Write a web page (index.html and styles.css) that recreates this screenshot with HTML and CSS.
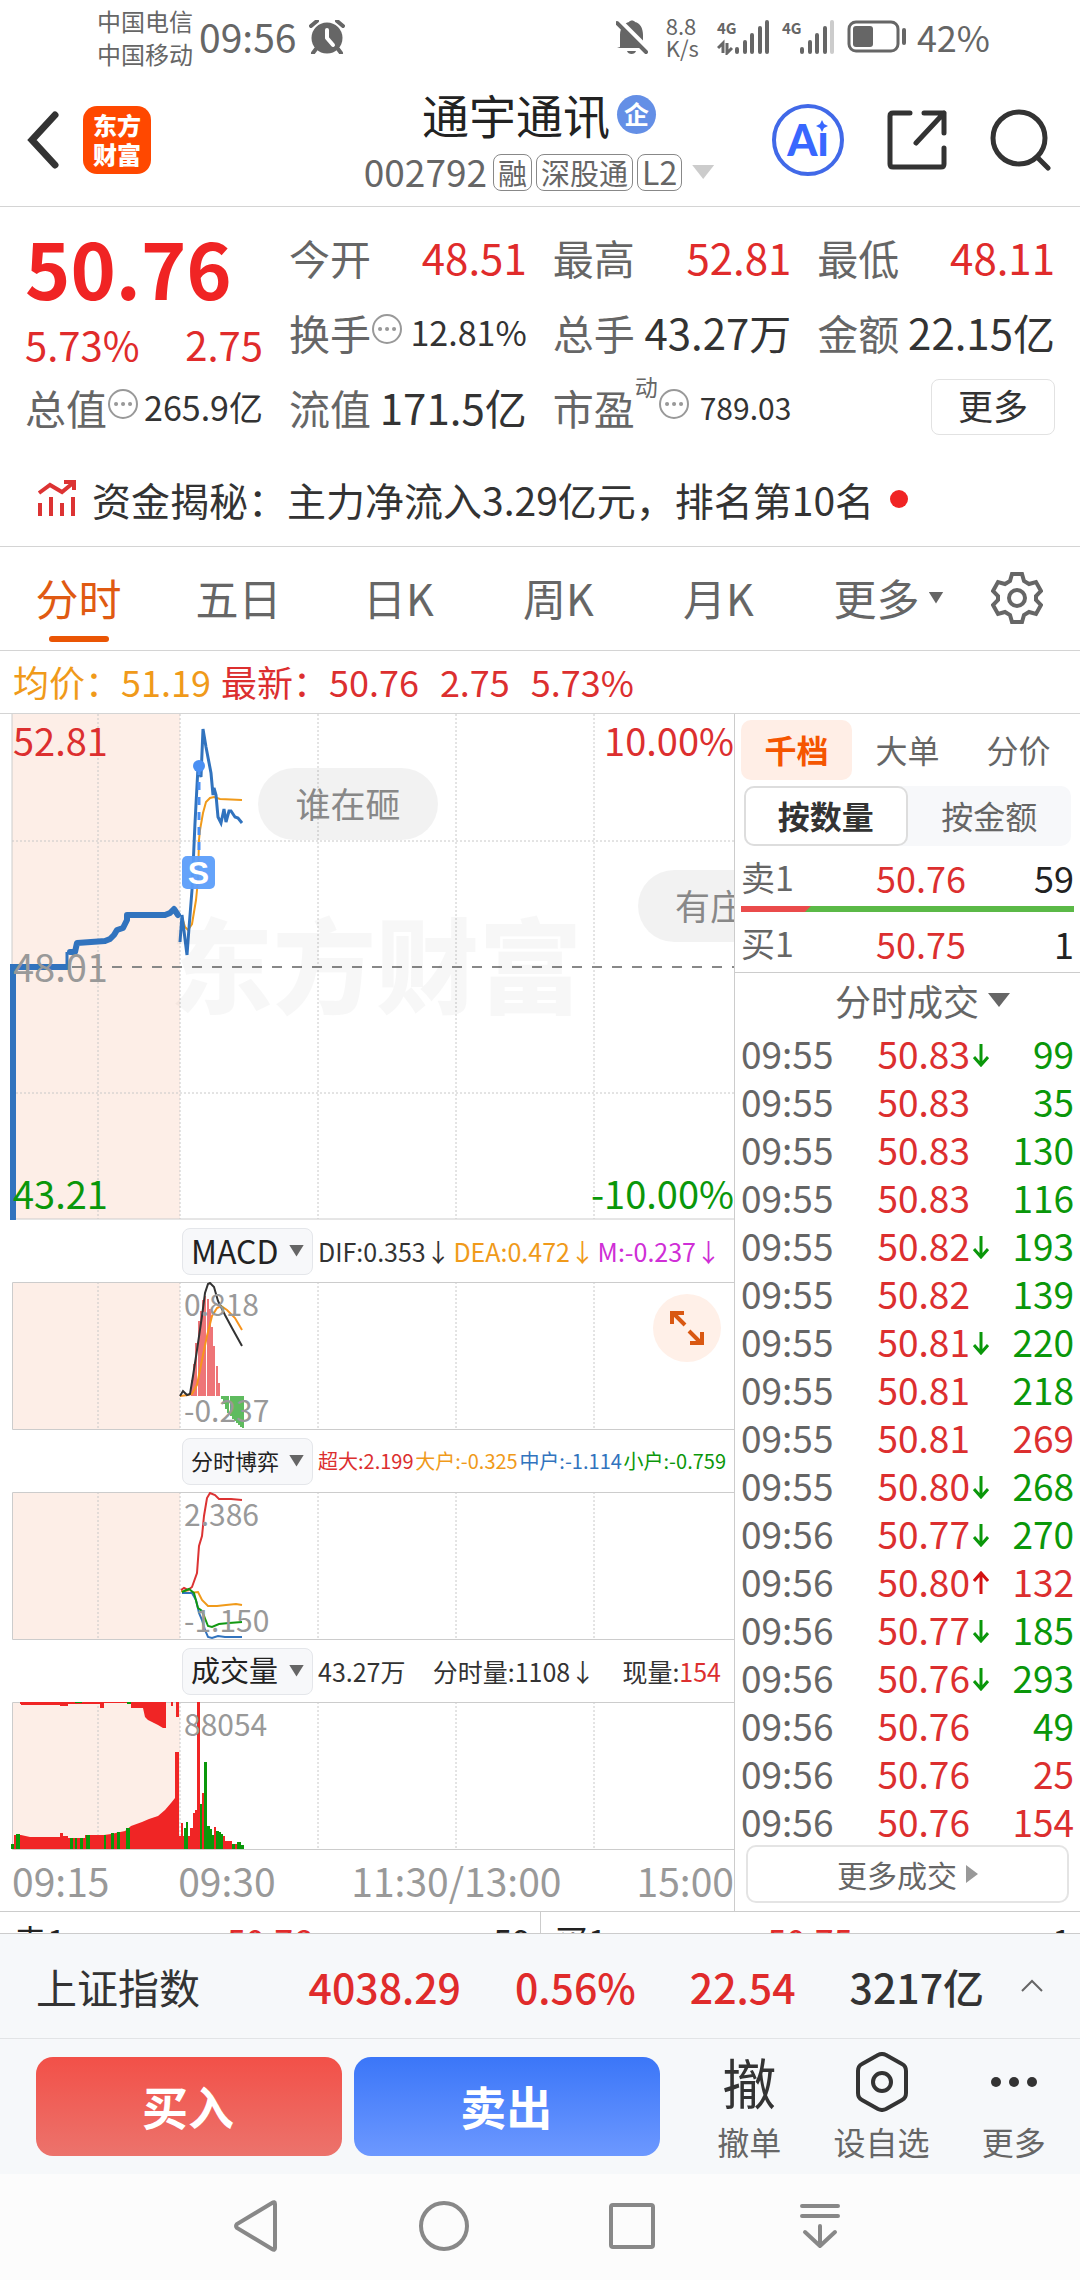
FILE: index.html
```html
<!DOCTYPE html>
<html lang="zh-CN">
<head>
<meta charset="utf-8">
<meta name="viewport" content="width=device-width, initial-scale=1">
<title>通宇通讯 002792</title>
<link rel="stylesheet" href="styles.css">
</head>
<body>
<div class="status-bar">
  <div class="carriers"><span>中国电信</span><span>中国移动</span></div>
  <span class="clock">09:56</span>
  <svg class="alarm" width="36" height="34" viewBox="0 0 36 34"><circle cx="18" cy="18" r="15.5" fill="#666"/><path d="M2 6L8 1M34 6L28 1M7 29L4 33M29 29L32 33" stroke="#666" stroke-width="4" stroke-linecap="round"/><path d="M18 10V18L24 25" stroke="#fff" stroke-width="4" fill="none" stroke-linecap="round" stroke-linejoin="round"/></svg>
  <div class="status-right">
    <svg width="32" height="36" viewBox="0 0 32 36"><path d="M4 28V16C4 8 9 4 13 3C14 1 18 1 19 3C24 4 27 9 27 16V24L29 28L30 29H1Z" fill="#666"/><path d="M11 32H20C19 36 12 36 11 32Z" fill="#666"/><path d="M3 1L32 30" stroke="#fff" stroke-width="5"/><path d="M1 4L30 33" stroke="#666" stroke-width="4" stroke-linecap="round"/></svg>
    <div class="speed"><span>8.8</span><span>K/s</span></div>
    <div class="signal"><span>4G</span><svg width="53" height="35" viewBox="0 0 53 35"><path d="M20 29V32M28 22V32M35 15V32M43 8V32M50 2V32" stroke="#666" stroke-width="4" stroke-linecap="round"/><path d="M6 33V23L1 28M10 23V33L15 28" stroke="#666" stroke-width="3" fill="none"/></svg></div>
    <div class="signal"><span>4G</span><svg width="53" height="35" viewBox="0 0 53 35"><path d="M20 29V32M28 22V32M35 15V32M43 8V32" stroke="#666" stroke-width="4" stroke-linecap="round"/><path d="M50 2V32" stroke="#ccc" stroke-width="4" stroke-linecap="round"/></svg></div>
    <svg width="60" height="34" viewBox="0 0 60 34"><rect x="2" y="2" width="49" height="29" rx="7" fill="none" stroke="#666" stroke-width="3"/><rect x="6" y="6" width="20" height="21" rx="3" fill="#666"/><path d="M57 10V23" stroke="#666" stroke-width="4" stroke-linecap="round"/></svg>
    <span class="battery">42%</span>
  </div>
</div>

<header class="title-bar">
  <div class="title-left">
    <button class="icon-button" aria-label="返回"><svg width="34" height="58" viewBox="0 0 34 58"><path d="M29 4L6 29L29 54" fill="none" stroke="#333" stroke-width="7" stroke-linecap="round" stroke-linejoin="miter"/></svg></button>
    <div class="logo"><span>东方</span><span>财富</span></div>
  </div>
  <div class="title-block">
    <h1>通宇通讯<span class="badge">企</span></h1>
    <div class="code-line"><span class="code">002792</span><span class="tag">融</span><span class="tag">深股通</span><span class="tag tag-wide">L2</span><i class="tri tri-light"></i></div>
  </div>
  <div class="title-right">
    <button class="icon-button ai" aria-label="智能助手"><span>Ai</span><svg class="spark" width="12" height="12" viewBox="0 0 12 12"><path d="M6 0L8 4L12 6L8 8L6 12L4 8L0 6L4 4Z" fill="#3867ff"/></svg></button>
    <button class="icon-button" aria-label="分享"><svg width="60" height="60" viewBox="0 0 60 60"><path d="M23 3H6Q3 3 3 6V54Q3 57 6 57H54Q57 57 57 54V38M37 3H57V23M57 3L29 33" fill="none" stroke="#333" stroke-width="5" stroke-linecap="round" stroke-linejoin="round"/></svg></button>
    <button class="icon-button" aria-label="搜索"><svg width="62" height="62" viewBox="0 0 62 62"><ellipse cx="29" cy="29" rx="26" ry="26" fill="none" stroke="#333" stroke-width="5"/><path d="M47 48L58 59" stroke="#333" stroke-width="5" stroke-linecap="round"/></svg></button>
  </div>
</header>

<section class="quote">
  <div class="price-col">
    <strong class="price">50.76</strong>
    <div class="change"><span>5.73%</span><span>2.75</span></div>
    <div class="stat"><span class="label">总值</span><svg class="info" viewBox="0 0 30 30"><circle cx="15" cy="15" r="14" fill="none" stroke="#999" stroke-width="2"/><path d="M8 15h.1M15 15h.1M22 15h.1" stroke="#999" stroke-width="4" stroke-linecap="round"/></svg><span class="value small">265.9亿</span></div>
  </div>
  <div class="stats">
    <div class="stat"><span class="label">今开</span><span class="value up">48.51</span></div>
    <div class="stat"><span class="label">最高</span><span class="value up">52.81</span></div>
    <div class="stat"><span class="label">最低</span><span class="value up">48.11</span></div>
    <div class="stat"><span class="label">换手</span><svg class="info" viewBox="0 0 30 30"><circle cx="15" cy="15" r="14" fill="none" stroke="#999" stroke-width="2"/><path d="M8 15h.1M15 15h.1M22 15h.1" stroke="#999" stroke-width="4" stroke-linecap="round"/></svg><span class="value small">12.81%</span></div>
    <div class="stat"><span class="label">总手</span><span class="value">43.27万</span></div>
    <div class="stat"><span class="label">金额</span><span class="value">22.15亿</span></div>
    <div class="stat"><span class="label">流值</span><span class="value">171.5亿</span></div>
    <div class="stat"><span class="label">市盈<sup>动</sup></span><svg class="info" viewBox="0 0 30 30"><circle cx="15" cy="15" r="14" fill="none" stroke="#999" stroke-width="2"/><path d="M8 15h.1M15 15h.1M22 15h.1" stroke="#999" stroke-width="4" stroke-linecap="round"/></svg><span class="value tiny">789.03</span></div>
    <div class="stat"><button class="more-stats">更多</button></div>
  </div>
</section>

<a class="news" href="#funds">
  <svg width="40" height="38" viewBox="0 0 40 38"><path d="M3 13L14 5L26 12L37 3M28 2H38V10M4 23V36M15 17V36M26 23V36M37 17V36" fill="none" stroke="#dc3333" stroke-width="4"/></svg>
  <span>资金揭秘：主力净流入3.29亿元，排名第10名</span><i class="dot"></i>
</a>

<nav class="periods">
  <button class="active">分时</button><button>五日</button><button>日K</button><button>周K</button><button>月K</button>
  <button>更多<i class="tri tri-mini"></i></button>
  <button aria-label="设置"><svg width="52" height="54" viewBox="0 0 52 54"><path d="M21 3H31L33 10L38 13L45 11L50 20L45 25V29L50 34L45 43L38 41L33 44L31 51H21L19 44L14 41L7 43L2 34L7 29V25L2 20L7 11L14 13L19 10Z" fill="none" stroke="#666" stroke-width="4"/><circle cx="26" cy="27" r="8" fill="none" stroke="#666" stroke-width="4"/></svg></button>
</nav>

<div class="averages"><span class="avg">均价：51.19</span><span>最新：50.76</span><span class="wide">2.75</span><span class="wide">5.73%</span></div>

<main class="market">
  <section class="charts">
    <div class="plot plot-price">
      <span class="watermark">东方财富</span>
      <svg viewBox="0 0 734 506" preserveAspectRatio="none">
        <rect x="12" y="0" width="168" height="505" fill="#fdeee7"/>
        <path class="grid" d="M98 0V505M180 0V505M318 0V505M456 0V505M594 0V505M12 127H734M12 379H734"/>
        <path d="M12 0V505H734" fill="none" stroke="#ccc"/>
        <path d="M12 253H734" stroke="#888" stroke-width="2" stroke-dasharray="10 10"/>
        <path d="M182 203L185 213L188 216L192 210L196 186L198 166L199 126L200 116L203 99L206 88L210 84L214 83L220 85L242 86" fill="none" stroke="#f09a1a" stroke-width="2"/>
        <path d="M13 505V253H67" fill="none" stroke="#3173be" stroke-width="6" stroke-linecap="round"/>
        <path d="M67 253V238" stroke="#3173be" stroke-width="3"/>
        <path d="M70 238H75L77 229L105 227L110 225L114 221L117 216L123 214L127 206V201H165L170 199L174 195L178 201" fill="none" stroke="#3173be" stroke-width="6" stroke-linecap="round" stroke-linejoin="round"/>
        <path d="M180 228L182 201L187 241L189 214L192 176L195 109L198 53L201 63L203 15L206 33L211 59L213 81L214 74L216 81L218 103L221 109L224 95L226 108L229 97H231L235 103L238 104L242 109" fill="none" stroke="#3173be" stroke-width="3"/>
        <path d="M199 53V142" stroke="#4a90f5" stroke-width="3" stroke-dasharray="8 7"/>
        <circle cx="199" cy="52" r="6" fill="#4a8ff3"/>
        <rect x="182" y="142" width="33" height="33" rx="5" fill="#5c9efa" fill-opacity=".95"/>
      </svg>
      <span class="marker">S</span>
      <span class="axis high">52.81</span><span class="axis high right">10.00%</span>
      <span class="axis mid">48.01</span>
      <span class="axis low">43.21</span><span class="axis low right">-10.00%</span>
      <button class="bubble bubble-one">谁在砸</button><button class="bubble bubble-two">有庄</button>
    </div>

    <div class="indicator-head"><button class="picker">MACD<i class="tri tri-mini"></i></button><div class="readout"><span>DIF:0.353↓</span><span class="c-orange">DEA:0.472↓</span><span class="c-purple">M:-0.237↓</span></div></div>
    <div class="plot plot-sub">
      <svg viewBox="0 0 734 148" preserveAspectRatio="none">
        <rect x="12" y="1" width="168" height="146" fill="#fdeee7"/>
        <path class="grid" d="M98 0V147M180 0V147M318 0V147M456 0V147M594 0V147"/>
        <path d="M734 0.500H12.500V147.500H734" fill="none" stroke="#ccc"/>
        <path d="M192 114V98M194 114V82M196 114V61M199 114V39M201 114V29M203 114V18M205 114V14M208 114V17M210 114V27M212 114V45M214 114V64M217 114V84M219 114V101" stroke="#e9474b" stroke-width="1.500"/>
        <path d="M222 114V117M224 114V122M226 114V127M228 114V131M231 114V134M233 114V137M235 114V139M237 114V141M239 114V143M241 114V145M243 114V146" stroke="#2aa52a" stroke-width="1.500"/>
        <path d="M180 114L188 113L192 112L197 103L202 78L207 54L212 34L217 26L221 24L227 28L235 36L242 48" fill="none" stroke="#f8941d" stroke-width="2"/>
        <path d="M180 114L183 109L187 113L190 112L193 94L197 68L202 34L205 11L208 2L210 1L214 5L218 19L225 33L232 46L242 64" fill="none" stroke="#333" stroke-width="2"/>
      </svg>
      <span class="range top">0.818</span><span class="range bottom">-0.237</span>
      <button class="expand" aria-label="全屏"><svg width="36" height="36" viewBox="0 0 36 36"><path d="M16 15L4 3M3 14V3H15M20 21L32 33M33 22V33H21" fill="none" stroke="#d95812" stroke-width="4"/></svg></button>
    </div>

    <div class="indicator-head"><button class="picker picker-small">分时博弈<i class="tri tri-mini"></i></button><div class="readout readout-small"><span class="c-red">超大:2.199</span><span class="c-orange">大户:-0.325</span><span class="c-blue">中户:-1.114</span><span class="c-green">小户:-0.759</span></div></div>
    <div class="plot plot-sub">
      <svg viewBox="0 0 734 148" preserveAspectRatio="none">
        <rect x="12" y="1" width="168" height="146" fill="#fdeee7"/>
        <path class="grid" d="M98 0V147M180 0V147M318 0V147M456 0V147M594 0V147"/>
        <path d="M734 0.500H12.500V147.500H734" fill="none" stroke="#ccc"/>
        <g fill="none" stroke-width="2">
          <path d="M181 99L189 101L198 100L202 108L208 114L217 114L226 113L236 112L242 113" stroke="#f09a1a"/>
          <path d="M182 101H192L196 108L199 121L202 128L205 138L208 145L212 146L218 144L225 145H242" stroke="#3173be"/>
          <path d="M181 98L184 96L188 98L192 95L197 81L199 54L202 44L204 24L207 6L210 1L215 3L219 7H231L242 8" stroke="#dc3333"/>
          <path d="M182 100L189 97L194 101L198 116L202 119L208 134L212 135L219 132L229 131L242 130" stroke="#119911"/>
        </g>
      </svg>
      <span class="range top">2.386</span><span class="range bottom">-1.150</span>
    </div>

    <div class="indicator-head"><button class="picker picker-mid">成交量<i class="tri tri-mini"></i></button><div class="readout"><span>43.27万</span><span>分时量:1108↓</span><span>现量:<b>154</b></span></div></div>
    <div class="plot plot-sub">
      <svg viewBox="0 0 734 148" preserveAspectRatio="none">
        <rect x="12" y="1" width="168" height="146" fill="#fdeee7"/>
        <path class="grid" d="M98 0V147M180 0V147M318 0V147M456 0V147M594 0V147"/>
        <path d="M734 0.500H12.500V147.500H734" fill="none" stroke="#ccc"/>
        <path d="M14 147V133H21L30 135H60V131H63V134H68V136H85V133H104L111 132L125 129L131 124L142 120L149 117L158 114L165 108L171 101L175 96V50H179V134H181V121H183V134H190V126H193V111H195V108H197V0H200V110H202V91H205V147ZM214 147V125H216V147ZM223 147V134H225V139H232V147ZM235 147V142H237V147Z" fill="#f02525"/>
        <path d="M20 0H33V2H20ZM21 0H60V3H21ZM36 0H60V4H68V2H100V6H104V1H131V6H143L145 15L148 18L152 20L158 23L163 26H166V0H171V4H173V0H176V15H179V0Z" fill="#f02525"/>
        <path d="M11 147V142H14V147ZM16 147V132H20V147ZM70 147V136H73V147ZM75 147V136H77V147ZM80 147V136H83V147ZM86 147V133H90V147ZM104 147V133H106V147ZM111 147V131H114V147ZM117 147V130H120V147ZM126 147V126H130V147ZM184 147V126H186V120H188V147ZM200 147V102H202V147ZM204 147V60H207V124H210V127H212V147H204ZM212 147V133H214V147ZM216 147V129H219V130H221V132H223V147ZM232 147V142H235V147ZM237 147V140H241V143H244V147ZM127 0H131V2H127ZM75 0H82V1H75Z" fill="#0a970a"/>
      </svg>
      <span class="range top">88054</span>
    </div>
    <div class="time-axis"><span>09:15</span><span>09:30</span><span>11:30/13:00</span><span>15:00</span></div>
  </section>

  <aside class="book">
    <div class="book-tabs"><button class="active">千档</button><button>大单</button><button>分价</button></div>
    <div class="segment"><button class="active">按数量</button><button>按金额</button></div>
    <div class="level"><span class="side">卖1</span><span class="up">50.76</span><span>59</span></div>
    <div class="ratio"><i></i></div>
    <div class="level"><span class="side">买1</span><span class="up">50.75</span><span>1</span></div>
    <button class="trades-title">分时成交<i class="tri"></i></button>
    <table class="trades">
      <tbody>
        <tr><td>09:55</td><td>50.83<svg class="arrow down" viewBox="0 0 16 24"><path d="M8 1V21M1 14L8 22L15 14"/></svg></td><td class="sell">99</td></tr>
        <tr><td>09:55</td><td>50.83</td><td class="sell">35</td></tr>
        <tr><td>09:55</td><td>50.83</td><td class="sell">130</td></tr>
        <tr><td>09:55</td><td>50.83</td><td class="sell">116</td></tr>
        <tr><td>09:55</td><td>50.82<svg class="arrow down" viewBox="0 0 16 24"><path d="M8 1V21M1 14L8 22L15 14"/></svg></td><td class="sell">193</td></tr>
        <tr><td>09:55</td><td>50.82</td><td class="sell">139</td></tr>
        <tr><td>09:55</td><td>50.81<svg class="arrow down" viewBox="0 0 16 24"><path d="M8 1V21M1 14L8 22L15 14"/></svg></td><td class="sell">220</td></tr>
        <tr><td>09:55</td><td>50.81</td><td class="sell">218</td></tr>
        <tr><td>09:55</td><td>50.81</td><td class="buy">269</td></tr>
        <tr><td>09:55</td><td>50.80<svg class="arrow down" viewBox="0 0 16 24"><path d="M8 1V21M1 14L8 22L15 14"/></svg></td><td class="sell">268</td></tr>
        <tr><td>09:56</td><td>50.77<svg class="arrow down" viewBox="0 0 16 24"><path d="M8 1V21M1 14L8 22L15 14"/></svg></td><td class="sell">270</td></tr>
        <tr><td>09:56</td><td>50.80<svg class="arrow rise" viewBox="0 0 16 24"><path d="M8 23V3M1 10L8 2L15 10"/></svg></td><td class="buy">132</td></tr>
        <tr><td>09:56</td><td>50.77<svg class="arrow down" viewBox="0 0 16 24"><path d="M8 1V21M1 14L8 22L15 14"/></svg></td><td class="sell">185</td></tr>
        <tr><td>09:56</td><td>50.76<svg class="arrow down" viewBox="0 0 16 24"><path d="M8 1V21M1 14L8 22L15 14"/></svg></td><td class="sell">293</td></tr>
        <tr><td>09:56</td><td>50.76</td><td class="sell">49</td></tr>
        <tr><td>09:56</td><td>50.76</td><td class="buy">25</td></tr>
        <tr><td>09:56</td><td>50.76</td><td class="buy">154</td></tr>
      </tbody>
    </table>
    <button class="more-trades">更多成交<i class="tri tri-right"></i></button>
  </aside>
</main>

<div class="depth">
  <div><span>卖1</span><span class="up">50.76</span><span>59</span></div>
  <div><span>买1</span><span class="up">50.75</span><span>1</span></div>
</div>

<div class="index-bar">
  <span class="index-name">上证指数</span><b class="up">4038.29</b><b class="up">0.56%</b><b class="up">22.54</b><b>3217亿</b>
  <svg width="24" height="14" viewBox="0 0 24 14"><path d="M2 12L12 2L22 12" fill="none" stroke="#666" stroke-width="2"/></svg>
</div>

<div class="actions">
  <button class="trade buy-button">买入</button><button class="trade sell-button">卖出</button>
  <div class="tools">
    <button><span class="glyph">撤</span><span>撤单</span></button>
    <button><span class="glyph"><svg width="54" height="60" viewBox="0 0 54 60"><path d="M23 3Q27 1 31 3L47 12Q51 14 51 19V41Q51 46 47 48L31 57Q27 59 23 57L7 48Q3 46 3 41V19Q3 14 7 12Z" fill="none" stroke="#333" stroke-width="4"/><circle cx="27" cy="30" r="9" fill="none" stroke="#333" stroke-width="4"/></svg></span><span>设自选</span></button>
    <button><span class="glyph"><svg width="50" height="12" viewBox="0 0 50 12"><g fill="#333"><circle cx="7" cy="6" r="5"/><circle cx="25" cy="6" r="5"/><circle cx="43" cy="6" r="5"/></g></svg></span><span>更多</span></button>
  </div>
</div>

<nav class="system-nav">
  <button aria-label="返回"><svg width="46" height="54" viewBox="0 0 46 54"><path d="M42 5V49Q42 52 39 50L4 29Q2 27 4 25L39 4Q42 2 42 5Z" fill="none" stroke="#888" stroke-width="4"/></svg></button>
  <button aria-label="主页"><svg width="52" height="52" viewBox="0 0 52 52"><circle cx="26" cy="26" r="23" fill="none" stroke="#888" stroke-width="4"/></svg></button>
  <button aria-label="最近任务"><svg width="48" height="48" viewBox="0 0 48 48"><rect x="3" y="3" width="42" height="42" rx="2" fill="none" stroke="#888" stroke-width="4"/></svg></button>
  <button aria-label="下拉通知"><svg width="44" height="48" viewBox="0 0 44 48"><path d="M4 4H40M4 14H40M22 24V44M7 30L22 44L37 30" fill="none" stroke="#888" stroke-width="4" stroke-linecap="round" stroke-linejoin="round"/></svg></button>
</nav>
</body>
</html>
```
FILE: styles.css
```css
* { box-sizing: border-box; }
body {
  margin: 0;
  background: #fff;
  color: #333;
  font-family: "Noto Sans CJK SC", "Noto Sans", sans-serif;
  font-size: 36px;
  line-height: 1;
  white-space: nowrap;
}
button {
  margin: 0;
  padding: 0;
  border: 0;
  background: none;
  color: inherit;
  font: inherit;
  line-height: inherit;
}
svg { display: block; flex: none; }
i { font-style: normal; }

.up { color: #e02b2b; }
.tri { display: inline-block; width: 22px; height: 14px; background: #666; clip-path: polygon(0 0, 100% 0, 50% 100%); flex: none; }
.tri-light { background: #ccc; }
.tri-mini { width: 15px; height: 12px; }
.tri-right { width: 12px; height: 18px; background: #999; clip-path: polygon(0 0, 100% 50%, 0 100%); }

/* phone status bar */
.status-bar { display: flex; align-items: center; height: 76px; padding: 0 90px 2px 97px; color: #666; }
.carriers, .speed { display: flex; flex-direction: column; font-size: 24px; line-height: 33px; }
.clock { margin: 0 13px 0 6px; font-size: 39px; line-height: 72px; padding-bottom: 2px; }
.status-right { display: flex; align-items: center; margin-left: auto; gap: 12px; }
.speed { margin: 0 6px; font-size: 22px; line-height: 22px; padding-bottom: 2px; }
.signal { position: relative; }
.signal span { position: absolute; left: 0; top: 0; font-size: 15px; line-height: 15px; font-weight: 700; }
.battery { font-size: 36px; line-height: 72px; padding-bottom: 2px; margin-left: -2px; }

/* title */
.title-bar { display: grid; grid-template-columns: 1fr auto 1fr; align-items: center; height: 131px; padding: 0 28px 2px 26px; border-bottom: 1px solid #d4d4d4; }
.title-left, .title-right { display: flex; align-items: center; }
.title-left { gap: 23px; }
.title-right { justify-content: flex-end; gap: 43px; }
.logo { display: flex; flex-direction: column; justify-content: center; align-items: center; width: 68px; height: 68px; border-radius: 14px; background: #ff4800; color: #fff; font-size: 24px; line-height: 29px; font-weight: 900; padding-bottom: 2px; }
.title-block { padding-top: 8px; }
h1 { display: flex; align-items: center; justify-content: center; gap: 7px; margin: 0; font-size: 47px; line-height: 56px; font-weight: 400; color: #222; }
.badge { display: inline-flex; align-items: center; justify-content: center; width: 39px; height: 39px; border-radius: 50%; background: #648fe6; color: #fff; font-size: 25px; line-height: 25px; font-weight: 700; padding-bottom: 2px; }
.code-line { display: flex; align-items: center; height: 60px; gap: 4px; color: #666; }
.code { font-size: 37px; line-height: 60px; padding-bottom: 2px; margin-right: 2px; }
.tag { border: 1px solid #888; border-radius: 8px; padding: 0 4px; font-size: 29px; line-height: 34px; height: 37px; }
.tag-wide { font-size: 32px; line-height: 33px; }
.code-line .tri { margin-left: 6px; }
.ai { position: relative; width: 72px; height: 72px; border: 4px solid #4169e8; border-radius: 50%; color: #3867ff; font-family: Lato, "Noto Sans CJK SC", sans-serif; font-size: 43px; line-height: 60px; font-weight: 900; }
.spark { position: absolute; right: 12px; top: 12px; background: #fff; }

/* quote */
.quote { display: flex; gap: 26px; padding: 13px 25px 0; }
.price-col { display: flex; flex-direction: column; flex: 238 1 0; min-width: 0; }
.price { font-size: 77px; line-height: 94px; height: 101px; font-weight: 700; color: #f02424; }
.change { display: flex; justify-content: space-between; font-size: 40px; line-height: 46px; height: 49px; color: #e02b2b; }
.stats { display: grid; grid-template-columns: repeat(3, 1fr); column-gap: 26px; flex: 766 1 0; min-width: 0; }
.stat { display: flex; align-items: center; height: 75px; padding-bottom: 2px; }
.label { position: relative; font-size: 41px; line-height: 72px; color: #666; }
.label sup { display: inline-block; font-size: 23px; line-height: 23px; vertical-align: 29px; }
.value { margin-left: auto; font-size: 42px; line-height: 72px; }
.value.small { font-size: 34px; }
.value.tiny { margin-left: 11px; font-size: 30px; }
.info { width: 30px; height: 30px; margin: 0 0 6px 1px; }
.more-stats { margin-left: auto; width: 124px; height: 56px; border: 1px solid #e2e2e2; border-radius: 8px; font-size: 35px; line-height: 50px; padding-bottom: 4px; }

.news { display: flex; align-items: center; height: 102px; padding: 6px 36px 0; border-bottom: 1px solid #d4d4d4; color: #333; text-decoration: none; font-size: 39px; line-height: 60px; gap: 16px; }
.dot { width: 18px; height: 18px; border-radius: 50%; background: #f02424; }

/* chart period tabs */
.periods { display: grid; grid-template-columns: repeat(5, 160fr) 180fr 76fr; height: 104px; padding-right: 24px; border-bottom: 1px solid #d4d4d4; color: #666; }
.periods button { display: flex; align-items: center; justify-content: center; gap: 9px; font-size: 43px; padding: 0 3px 2px 0; position: relative; }
.periods .active { color: #e05a12; }
.periods .active::after { content: ""; position: absolute; left: calc(50% - 31px); bottom: 8px; width: 60px; height: 6px; border-radius: 3px; background: #ea5504; }

.averages { display: flex; gap: 10px; height: 63px; padding-left: 13px; border-bottom: 1px solid #d4d4d4; color: #dc2f2f; font-size: 36px; line-height: 60px; }
.averages .avg { color: #f09a1a; }
.averages .wide { margin-left: 11px; }

/* charts and order book */
.market { display: grid; grid-template-columns: 734fr 346fr; border-bottom: 1px solid #ccc; }
.charts { min-width: 0; }
.plot { position: relative; overflow: hidden; }
.plot > svg { width: 100%; height: 100%; position: relative; }
.plot-price { height: 506px; }
.plot-sub { height: 148px; }
.grid { fill: none; stroke: #c8c8c8; stroke-width: 1; stroke-dasharray: 2 2; }
.axis { position: absolute; left: 13px; font-size: 38px; line-height: 40px; }
.axis.right { left: auto; right: 0; }
.high { top: 6px; color: #dc2f2f; }
.mid { top: calc(50% - 21px); color: #999; }
.low { bottom: 7px; color: #0a970a; }
.watermark { position: absolute; z-index: 1; left: 170px; top: calc(50% - 60px); font-size: 103px; line-height: 110px; font-weight: 900; color: rgba(0, 0, 0, .03); }
.marker { position: absolute; left: 182px; top: 142px; width: 33px; font: 700 32px/34px "Liberation Sans", sans-serif; color: #fff; text-align: center; }
.bubble { position: absolute; width: 180px; height: 72px; border-radius: 36px; background: rgba(0, 0, 0, .05); color: #888; font-size: 35px; padding-bottom: 4px; }
.bubble-one { left: 258px; top: 54px; }
.bubble-two { left: 638px; top: 156px; text-align: left; padding-left: 37px; }

.indicator-head { display: flex; align-items: center; height: 62px; padding-left: 182px; gap: 5px; }
.picker { display: flex; align-items: center; justify-content: space-between; width: 131px; height: 47px; border: 1px solid #e4e6ea; border-radius: 8px; background: #f7f8fa; padding: 0 8px 3px; color: #222; font-size: 32px; flex: none; }
.picker-small { font-size: 22px; }
.picker-mid { font-size: 29px; }
.picker .tri { position: relative; top: 1px; }
.readout { display: flex; justify-content: space-between; flex: 1; min-width: 0; padding-right: 13px; font-size: 25px; line-height: 40px; }
.readout-small { font-size: 20px; padding-right: 8px; }
.readout b { font-weight: 400; color: #dc2f2f; }
.c-red { color: #dc2f2f; }
.c-orange { color: #f09a1a; }
.c-purple { color: #cf2ed6; }
.c-blue { color: #3173be; }
.c-green { color: #0a970a; }
.range { position: absolute; left: 184px; font-size: 30px; line-height: 32px; color: #999; }
.range.top { top: 5px; }
.range.bottom { bottom: 5px; }
.expand { position: absolute; right: 13px; top: 12px; display: grid; place-items: center; width: 68px; height: 68px; border-radius: 50%; background: #fff0e8; }
.time-axis { display: grid; grid-template-columns: 166fr 173fr 285fr 97fr; height: 61px; padding-left: 12px; color: #999; font-size: 39px; line-height: 60px; }
.time-axis span:last-child { justify-self: end; }

.book { min-width: 0; padding: 6px 6px 8px; border-left: 1px solid #ccc; }
.book-tabs { display: grid; grid-template-columns: repeat(3, 1fr); height: 60px; color: #666; font-size: 32px; }
.book-tabs button, .segment button { padding-bottom: 2px; }
.book-tabs .active { border-radius: 10px; background: #ffeee6; color: #f55500; font-weight: 700; }
.segment { display: grid; grid-template-columns: 1fr 1fr; height: 60px; margin: 6px 3px 0; border-radius: 10px; background: #f7f8fa; color: #666; font-size: 32px; }
.segment .active { border: 2px solid #ddd; border-radius: 10px; background: #fff; color: #333; font-weight: 700; }
.level { display: grid; grid-template-columns: 135fr 110fr 88fr; height: 60px; font-size: 36px; line-height: 62px; color: #222; }
.level + .trades-title { line-height: 50px; }
.level span:last-child { text-align: right; }
.level .up { color: #dc2f2f; }
.level .side { color: #666; font-size: 34px; }
.ratio { height: 6px; background: #5bb947; }
.ratio i { display: block; width: 21%; height: 6px; background: #ea4b4b; clip-path: polygon(0 0, 100% 0, calc(100% - 6px) 100%, 0 100%); }
.trades-title { display: flex; align-items: center; justify-content: center; gap: 9px; width: calc(100% + 12px); margin: 0 -6px; padding: 0 0 2px 30px; height: 57px; border-top: 1px solid #ccc; color: #666; font-size: 36px; }
.trades { width: 100%; table-layout: fixed; border-collapse: collapse; font-size: 37px; line-height: 48px; }
.trades td { height: 48px; padding: 0; }
.trades td:nth-child(1) { width: 41%; color: #666; }
.trades td:nth-child(2) { width: 35%; color: #dc2f2f; }
.trades td:nth-child(3) { text-align: right; }
.trades .sell { color: #0a970a; }
.trades .buy { color: #dc2f2f; }
.arrow { display: inline-block; width: 16px; height: 24px; margin-left: 3px; fill: none; stroke: #0a970a; stroke-width: 3; vertical-align: 2px; }
.trades .rise { stroke: #d41212; }
.more-trades { display: flex; align-items: center; justify-content: center; gap: 9px; width: calc(100% - 10px); height: 58px; margin: 0 5px; border: 2px solid #e4e4e4; border-radius: 10px; color: #666; font-size: 30px; }

.depth { display: grid; grid-template-columns: 1fr 1fr; height: 22px; overflow: hidden; border-bottom: 1px solid #ccc; font-size: 34px; line-height: 58px; color: #222; }
.depth div { display: grid; grid-template-columns: 214fr 200fr 104fr; padding: 0 9px 0 13px; }
.depth div + div { border-left: 1px solid #ccc; }
.depth span:last-child { text-align: right; }

/* bottom bars */
.index-bar { display: flex; align-items: center; gap: 54px; height: 105px; padding: 0 36px; background: #f6f8fa; border-bottom: 1px solid #e2e4e6; font-size: 41px; line-height: 96px; }
.index-bar b { font-weight: 500; }
.index-name { margin-right: auto; }
.index-bar svg { margin-left: -18px; }
.actions { display: flex; height: 135px; padding: 18px 0 18px 36px; gap: 12px; background: #f6f8fa; }
.trade { flex: 305 1 0; border-radius: 17px; color: #fff; font-size: 46px; font-weight: 700; padding: 0 2px 4px 0; }
.buy-button { background: linear-gradient(#f25048, #ec736c); }
.sell-button { background: linear-gradient(#3b76f8, #6c98ff); }
.tools { display: grid; grid-template-columns: repeat(3, 1fr); flex: 398 1 0; margin: -9px 0 -12px 11px; }
.tools button { display: flex; flex-direction: column; align-items: center; color: #666; font-size: 32px; line-height: 52px; }
.tools .glyph { display: grid; place-items: center; height: 67px; color: #333; font-size: 54px; line-height: 60px; }
.system-nav { display: grid; grid-template-columns: repeat(4, 1fr); height: 106px; padding: 0 166px 2px 162px; background: #fcfcfc; }
.system-nav button { display: grid; place-items: center; }
```
